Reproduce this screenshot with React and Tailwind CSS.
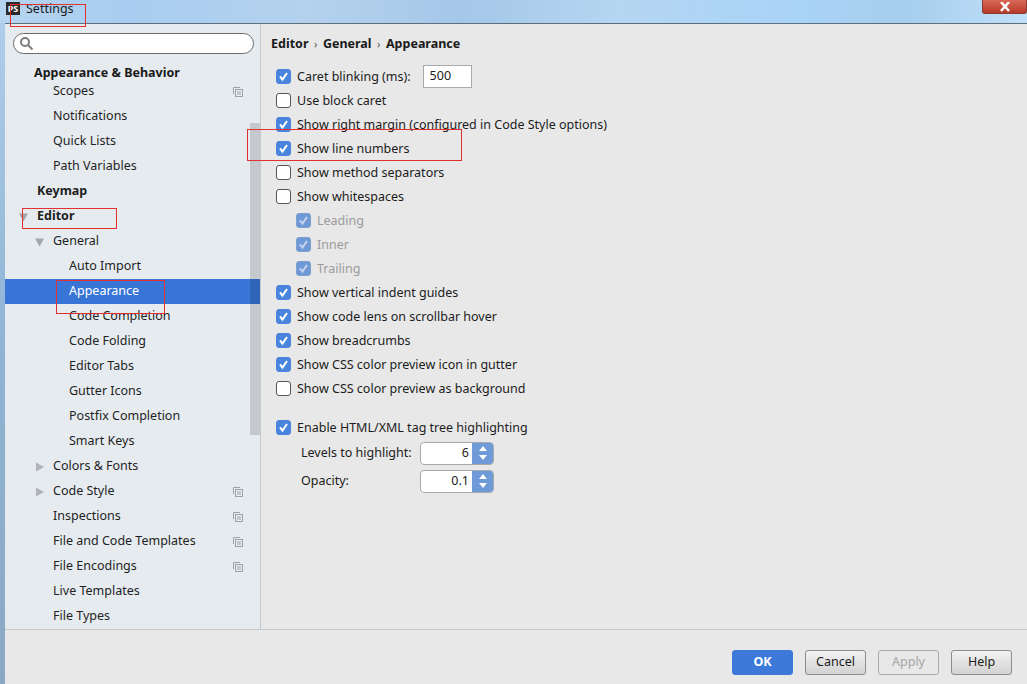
import React from "react";

const Copy = () => (
  <svg width="10" height="10" viewBox="0 0 10 10" className="absolute right-[17px] top-1/2 -translate-y-1/2" fill="none" stroke="#9aa3ab" strokeWidth="1">
    <path d="M.5 7V.5H7" />
    <rect x="2.5" y="2.5" width="7" height="7" fill="#e6ebf0" />
    <path d="M4 5h4M4 7h4" />
  </svg>
);

const Tri = ({ down }) => (
  <svg width="10" height="10" viewBox="0 0 10 10" className="absolute top-1/2 -translate-y-1/2 left-[30px]">
    {down ? <path d="M0 1.5h9l-4.5 8z" fill="#a3a7ab" /> : <path d="M1 .5v9l8-4.5z" fill="#b0b4b8" />}
  </svg>
);

const items = [
  { t: "Scopes", l: 48, copy: 1 },
  { t: "Notifications", l: 48 },
  { t: "Quick Lists", l: 48 },
  { t: "Path Variables", l: 48 },
  { t: "Keymap", l: 32, b: 1 },
  { t: "Editor", l: 32, b: 1, editor: 1 },
  { t: "General", l: 48, tri: "down" },
  { t: "Auto Import", l: 64 },
  { t: "Appearance", l: 64, sel: 1 },
  { t: "Code Completion", l: 64 },
  { t: "Code Folding", l: 64 },
  { t: "Editor Tabs", l: 64 },
  { t: "Gutter Icons", l: 64 },
  { t: "Postfix Completion", l: 64 },
  { t: "Smart Keys", l: 64 },
  { t: "Colors & Fonts", l: 48, tri: "right" },
  { t: "Code Style", l: 48, tri: "right", copy: 1 },
  { t: "Inspections", l: 48, copy: 1 },
  { t: "File and Code Templates", l: 48, copy: 1 },
  { t: "File Encodings", l: 48, copy: 1 },
  { t: "Live Templates", l: 48 },
  { t: "File Types", l: 48 },
];

const Check = ({ on, dim }) => (
  <span
    className={
      "flex w-[15px] h-[15px] shrink-0 items-center justify-center rounded-[3px] border " +
      (on
        ? dim
          ? "bg-[#6f98d6] border-[#7f9fd0]"
          : "bg-[#4a85dd] border-[#4a85dd]"
        : "bg-white border-[#555]")
    }
  >
    {on ? (
      <svg width="11" height="11" viewBox="0 0 11 11" fill="none" stroke={dim ? "#c3d4ec" : "#fff"} strokeWidth="2">
        <path d="M2 5.5l2.5 3L9 2" />
      </svg>
    ) : null}
  </span>
);

const Row = ({ on, t, dim, indent, children }) => (
  <div className={"flex items-center h-6 gap-[6px] " + (indent ? "pl-5" : "")}>
    <Check on={on} dim={dim} />
    <span className={"relative top-[1px] " + (dim ? "text-[#9b9b9b]" : "text-[#1c1c1c]")}>{t}</span>
    {children}
  </div>
);

const Spin = ({ v }) => (
  <div className="flex w-[74px] h-[23px] rounded-[4px] border border-[#a9a9a9] overflow-hidden bg-white">
    <div className="flex-1 flex items-center justify-end pr-[3px] text-[#1c1c1c]">{v}</div>
    <div className="w-[21px] bg-[#6f9ad8] flex items-center justify-center">
      <svg width="10" height="16" viewBox="0 0 10 16" fill="#fff">
        <path d="M5 1l4 5H1zM5 15l4-5H1z" />
      </svg>
    </div>
  </div>
);

const Btn = ({ children, cls }) => (
  <button className={"w-[61px] h-[25px] rounded-[3px] border flex items-center justify-center " + cls}>{children}</button>
);

const Mark = ({ cls }) => <div className={"absolute border border-[#e2302e] " + cls} />;

export default function App() {
  return (
    <div className="relative w-[1027px] h-[684px] overflow-hidden flex flex-col bg-[#e8e8e8] text-[12.5px] font-['Noto_Sans','Open_Sans',sans-serif]">
      <div className="h-[23px] shrink-0 relative flex items-center bg-[linear-gradient(90deg,#b5d4ef_0%,#a8cdf0_12%,#b4d2ee_30%,#a5c7e8_45%,#b5d6f2_60%,#a9d3f7_78%,#a6cdec_88%,#c0e0fa_100%)]">
        <div className="ml-[6px] mb-[7px] w-[14px] h-[13px] bg-[#2a2a2a] text-white text-[9px] font-bold leading-[13px] text-center">PS</div>
        <span className="ml-[6px] mb-[5px] text-[#1a1a1a]">Settings</span>
        <div className="absolute right-0 top-0 w-[45px] h-[14px] rounded-b-[3px] bg-[linear-gradient(#d9685a,#b83a28)] border border-[#8a3a32] border-t-0 flex items-center justify-center">
          <svg width="12" height="10" viewBox="0 0 12 10" fill="none" stroke="#fff" strokeWidth="2.5"><path d="M2 0l8 9M10 0L2 9" /></svg>
        </div>
      </div>
      <div className="flex-1 flex min-h-0">
        <div className="w-[5px] shrink-0 bg-[linear-gradient(#aecdea,#8fb3d4_50%,#8ba8c4)]" />
        <div className="flex-1 flex flex-col min-w-0 border-t border-[#5c6f7c]">
          <div className="h-[605px] flex">
            <aside className="relative w-[255px] shrink-0 bg-[#e6ebf0] overflow-hidden">
              <div className="mx-2 mt-[9px] h-[21px] w-[241px] rounded-full border border-[#6b6b6b] bg-white flex items-center pl-[5px]">
                <svg width="15" height="15" viewBox="0 0 15 15" fill="none" stroke="#7d7d7d" strokeWidth="2"><circle cx="6" cy="6" r="4" /><path d="M9 9l4.5 4.5" /></svg>
              </div>
              <div className="h-[25px] mt-[7px] pl-[29px] flex items-center font-bold text-[#1a1a1a]">Appearance &amp; Behavior</div>
              <div className="-mt-[7px]">
                {items.map((it) => (
                  <div key={it.t} className={"relative h-[25px] flex items-center " + (it.sel ? "bg-[#3875d7] text-white" : "text-[#1f1f1f]") + (it.b ? " font-bold" : "")} style={{ paddingLeft: it.l }}>
                    {it.tri ? <Tri down={it.tri === "down"} /> : null}
                    {it.editor ? (
                      <svg width="10" height="10" viewBox="0 0 10 10" className="absolute left-[14px] top-1/2 -translate-y-1/2"><path d="M0 1.5h9l-4.5 8z" fill="#a3a7ab" /></svg>
                    ) : null}
                    <span>{it.t}</span>
                    {it.copy ? <Copy /> : null}
                  </div>
                ))}
              </div>
              <div className="absolute left-[245px] top-[99px] w-[10px] h-[312px] bg-black/[0.14]" />
            </aside>
            <main className="flex-1 min-w-0 border-l border-[#c4c8cc] pl-[10px] pt-[11px]">
              <div className="flex items-center h-[18px] font-bold text-[#1a1a1a] gap-[5.5px]">
                <span>Editor</span><span className="font-normal text-[11px] text-[#555]">›</span><span>General</span><span className="font-normal text-[11px] text-[#555]">›</span><span>Appearance</span>
              </div>
              <div className="mt-[11px] pl-[5px]">
                <Row on t="Caret blinking (ms):">
                  <div className="ml-[6px] w-[49px] h-[23px] border border-[#a9a9a9] bg-white pl-[6px] flex items-center text-[#1c1c1c]">500</div>
                </Row>
                <Row t="Use block caret" />
                <Row on t="Show right margin (configured in Code Style options)" />
                <Row on t="Show line numbers" />
                <Row t="Show method separators" />
                <Row t="Show whitespaces" />
                <Row on dim indent t="Leading" />
                <Row on dim indent t="Inner" />
                <Row on dim indent t="Trailing" />
                <Row on t="Show vertical indent guides" />
                <Row on t="Show code lens on scrollbar hover" />
                <Row on t="Show breadcrumbs" />
                <Row on t="Show CSS color preview icon in gutter" />
                <Row t="Show CSS color preview as background" />
                <div className="mt-[15px]"><Row on t="Enable HTML/XML tag tree highlighting" /></div>
                <div className="mt-[1px] pl-[25px] flex items-center h-[26px] text-[#1c1c1c]"><span className="w-[119px]">Levels to highlight:</span><Spin v="6" /></div>
                <div className="mt-[2px] pl-[25px] flex items-center h-[26px] text-[#1c1c1c]"><span className="w-[119px]">Opacity:</span><Spin v="0.1" /></div>
              </div>
            </main>
          </div>
          <footer className="flex-1 border-t border-[#c8c8c8] flex items-start justify-end gap-[12px] pt-[20px] pr-[15px]">
            <Btn cls="bg-[#3d79d8] border-[#3d79d8] text-white font-bold">OK</Btn>
            <Btn cls="bg-[linear-gradient(#f2f2f2,#d2d2d2)] border-[#8d8d8d] text-[#1c1c1c]">Cancel</Btn>
            <Btn cls="bg-[#e8e8e8] border-[#ababab] text-[#a5a5a5]">Apply</Btn>
            <Btn cls="bg-[linear-gradient(#f2f2f2,#d2d2d2)] border-[#8d8d8d] text-[#1c1c1c]">Help</Btn>
          </footer>
        </div>
      </div>
      <Mark cls="left-[10px] top-[4px] w-[76px] h-[23px]" />
      <Mark cls="left-[247px] top-[129px] w-[215px] h-[32px]" />
      <Mark cls="left-[22px] top-[208px] w-[95px] h-[21px]" />
      <Mark cls="left-[56px] top-[280px] w-[109px] h-[34px]" />
    </div>
  );
}
